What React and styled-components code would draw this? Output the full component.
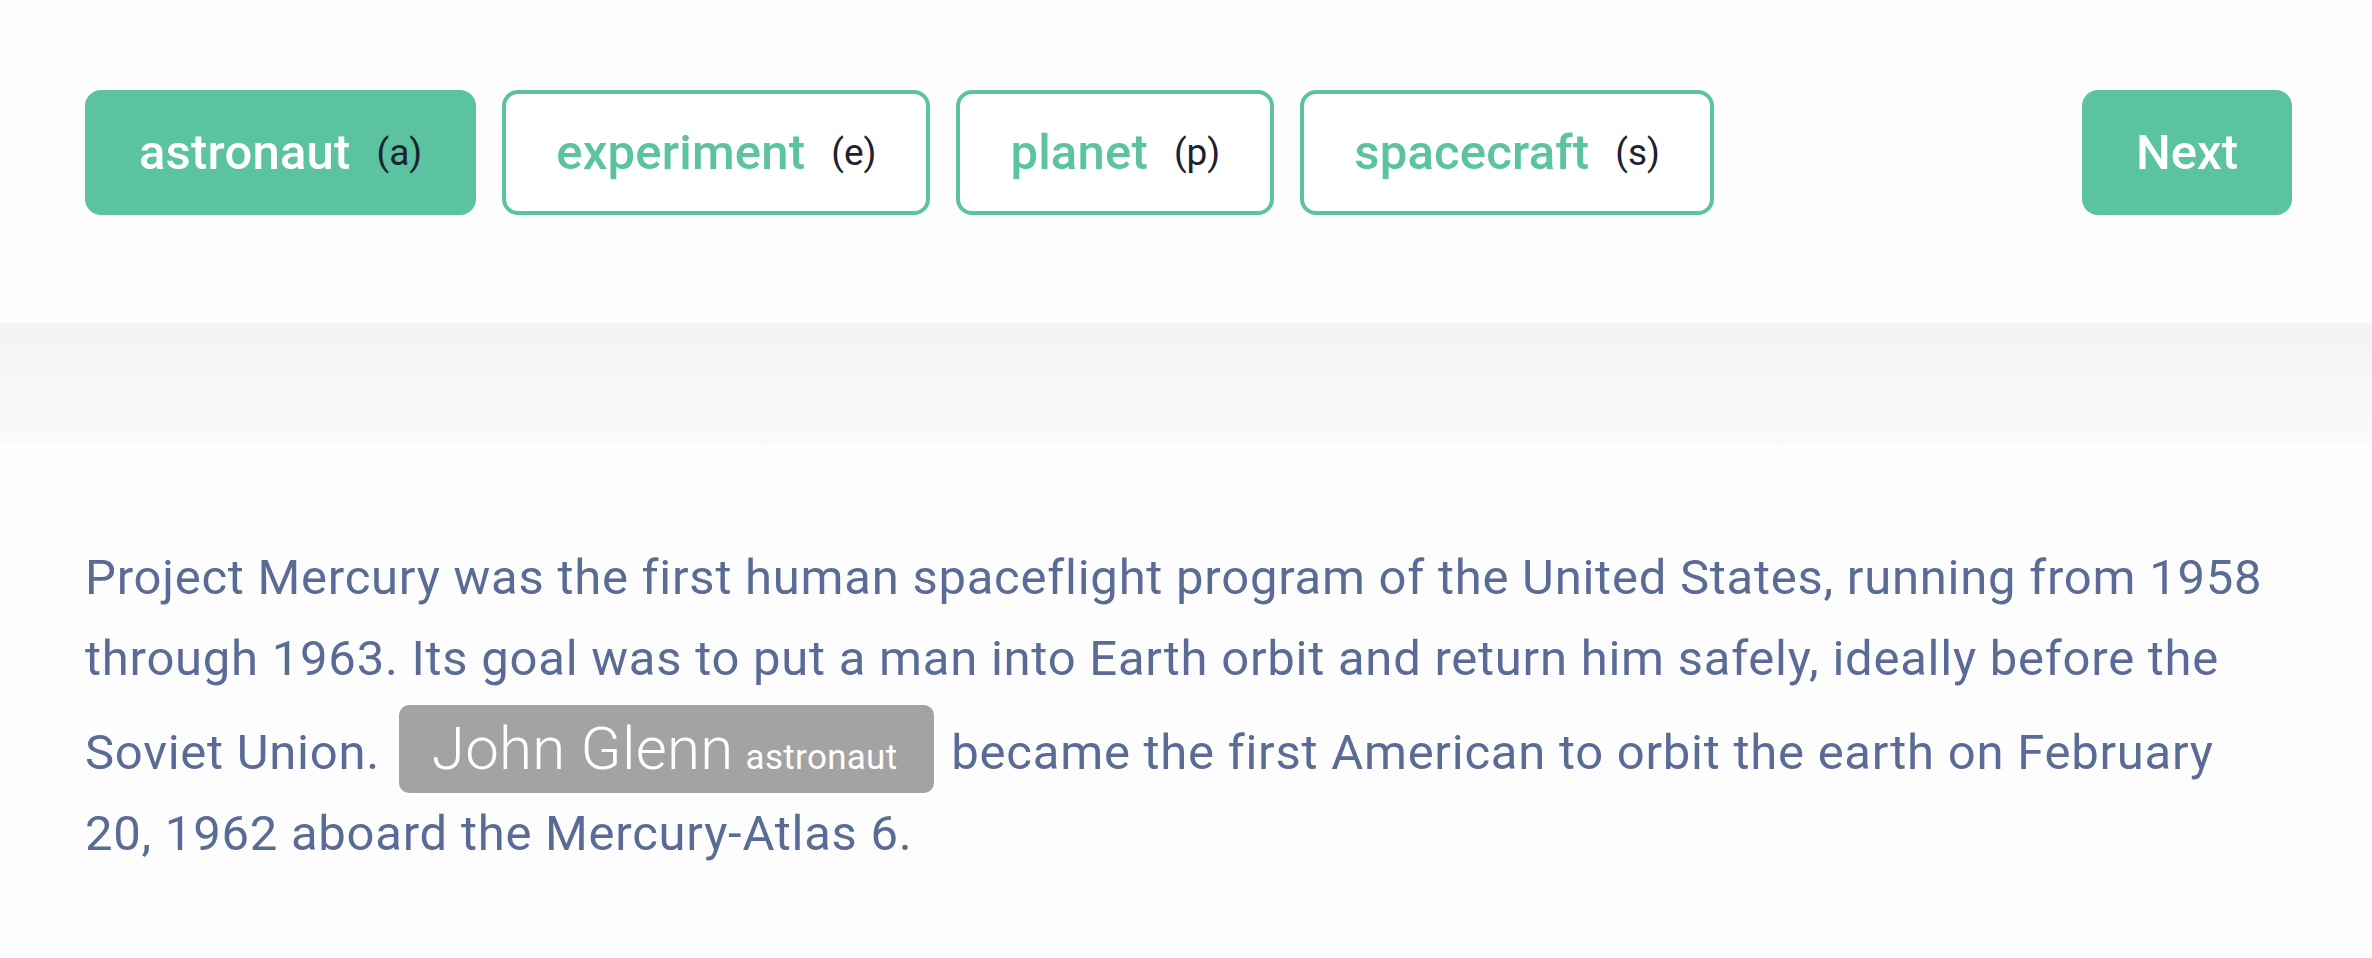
import React from 'react';
import styled, { createGlobalStyle } from 'styled-components';

const GlobalStyle = createGlobalStyle`
	body {
		margin: 0;
		background: #fdfdfd;
		font-family: Roboto, 'Noto Sans', sans-serif;
	}
`;

const Page = styled.div`
	width: 100%;
	min-height: 100vh;
`;

const Toolbar = styled.div`
	display: flex;
	align-items: center;
	gap: 26px;
	padding: 90px 80px 0 85px;
`;

const LabelBtn = styled.button`
	display: flex;
	align-items: center;
	gap: 26px;
	height: 125px;
	padding: 0 50px;
	border: 4px solid #5bc3a0;
	border-radius: 16px;
	background: ${({ active }) => (active ? '#5bc3a0' : '#ffffff')};
	cursor: pointer;
	font-family: inherit;
`;

const LabelName = styled.span`
	font-size: 49px;
	font-weight: 500;
	letter-spacing: 0.2px;
	color: ${({ active }) => (active ? '#ffffff' : '#5bc3a0')};
`;

const LabelKey = styled.span`
	font-size: 37px;
	font-weight: 400;
	color: #1d2130;
`;

const NextBtn = styled.button`
	margin-left: auto;
	height: 125px;
	padding: 0 54px;
	border: none;
	border-radius: 16px;
	background: #5bc3a0;
	color: #ffffff;
	font-family: inherit;
	font-size: 49px;
	font-weight: 500;
	cursor: pointer;
`;

const Band = styled.div`
	margin-top: 108px;
	height: 120px;
	background: linear-gradient(180deg, #f3f3f3 0%, #f7f7f7 50%, #fafafa 100%);
`;

const Passage = styled.p`
	margin: 0;
	padding: 94px 80px 0 85px;
	font-size: 49px;
	letter-spacing: 0.75px;
	line-height: 81px;
	color: #5a6b96;
`;

const Entity = styled.span`
	display: inline-block;
	margin: 6px 4px 0 6px;
	padding: 8px 37px 8px 33px;
	border-radius: 10px;
	background: #a3a3a3;
	color: #ffffff;
	font-size: 60px;
	font-weight: 300;
	letter-spacing: 0.3px;
	line-height: 72px;
`;

const EntityTag = styled.span`
	margin-left: 12px;
	font-size: 35px;
	font-weight: 400;
	line-height: 1;
`;

const labels = [
	{ name: 'astronaut', key: 'a' },
	{ name: 'experiment', key: 'e' },
	{ name: 'planet', key: 'p' },
	{ name: 'spacecraft', key: 's' },
];

const App = () => {
	const selected = 'astronaut';
	return (
		<Page>
			<GlobalStyle />
			<Toolbar>
				{labels.map((l) => (
					<LabelBtn key={l.name} active={l.name === selected}>
						<LabelName active={l.name === selected}>{l.name}</LabelName>
						<LabelKey>({l.key})</LabelKey>
					</LabelBtn>
				))}
				<NextBtn>Next</NextBtn>
			</Toolbar>
			<Band />
			<Passage>
				Project Mercury was the first human spaceflight program of the United States, running from 1958
				through 1963. Its goal was to put a man into Earth orbit and return him safely, ideally before the
				Soviet Union. <Entity>John Glenn<EntityTag>astronaut</EntityTag></Entity> became the first American
				to orbit the earth on February 20, 1962 aboard the Mercury-Atlas 6.
			</Passage>
		</Page>
	);
};

export default App;
